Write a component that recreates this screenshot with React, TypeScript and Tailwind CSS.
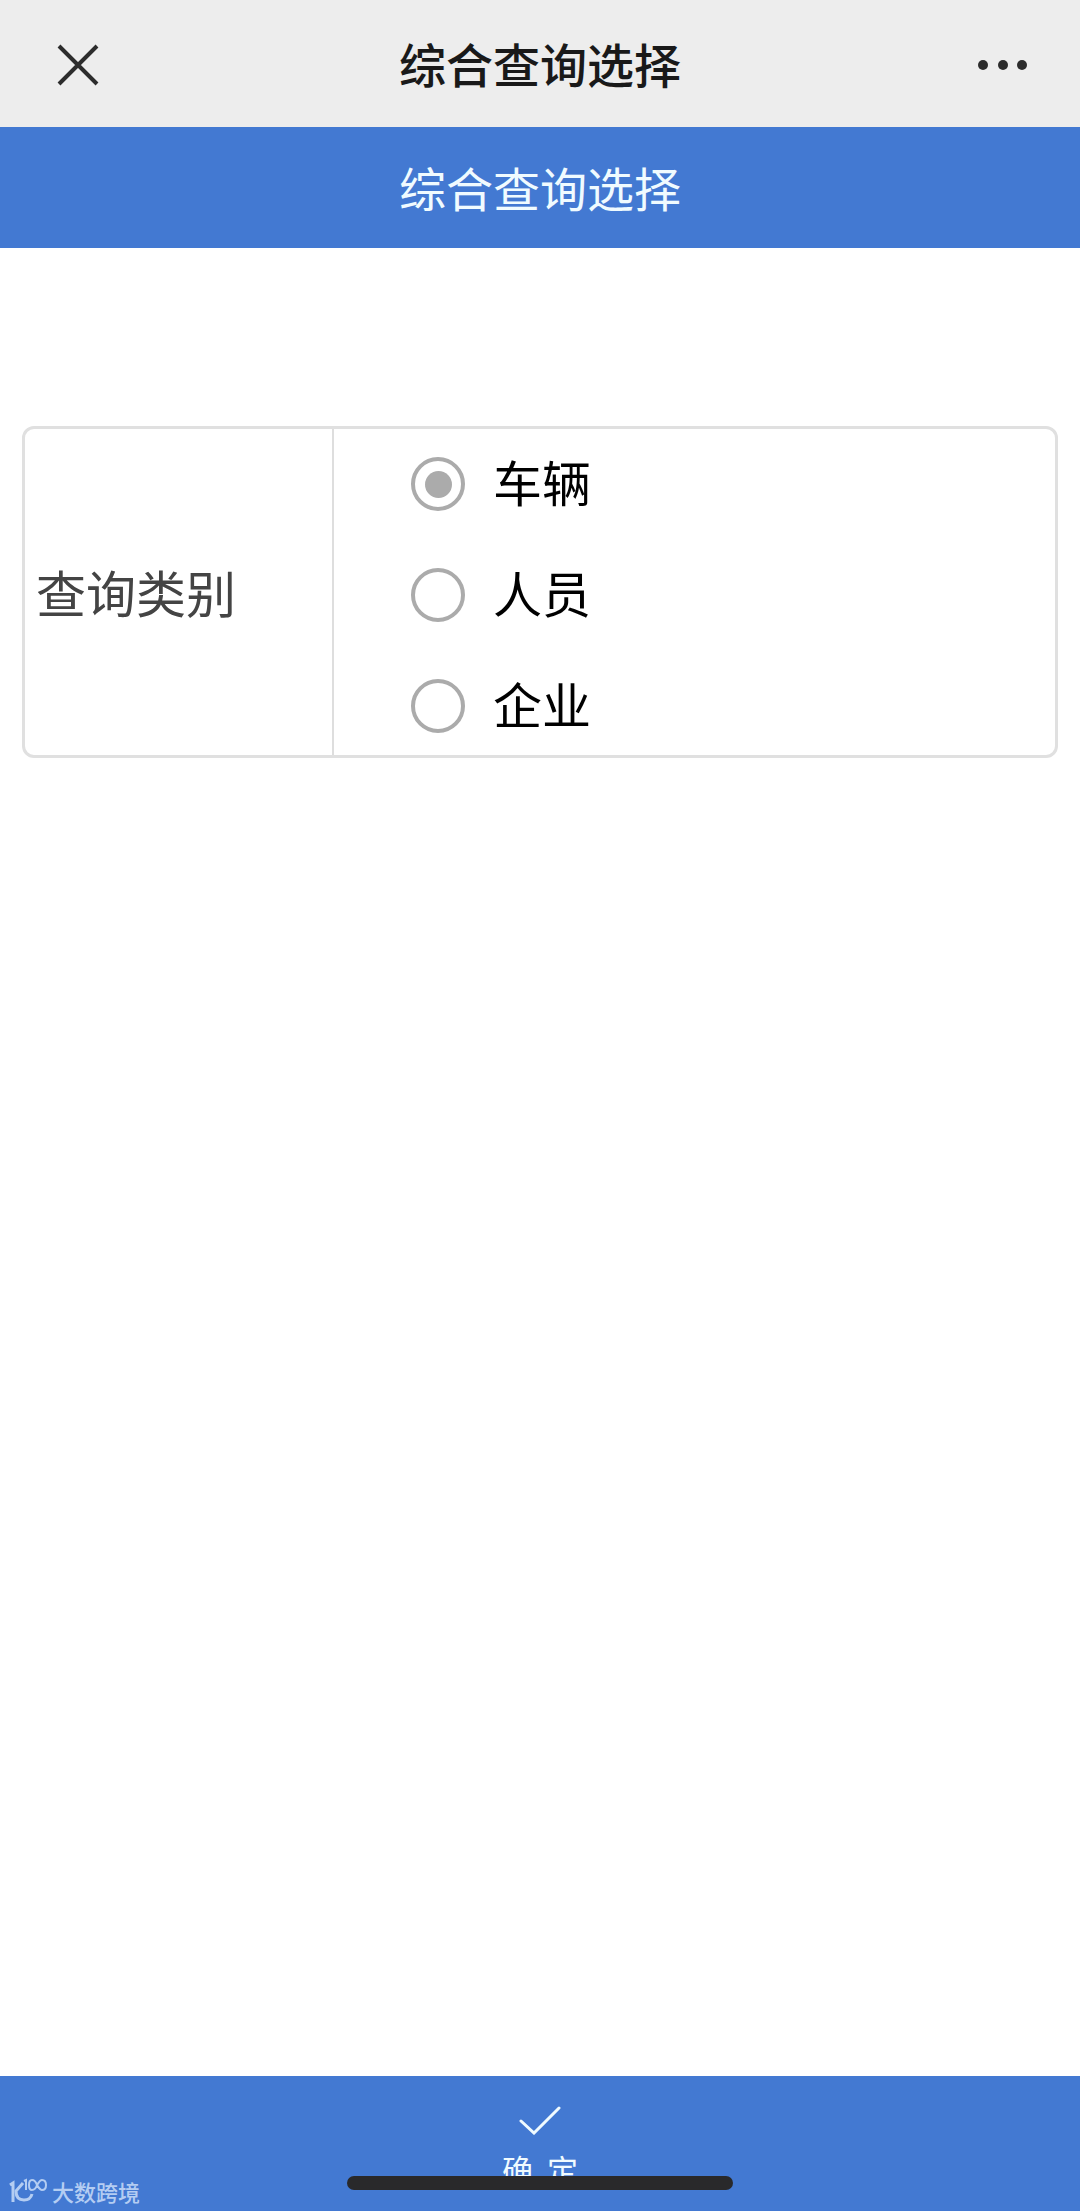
import { useState } from "react";

const OPTIONS = ["车辆", "人员", "企业"];

function NavBar() {
  return (
    <header className="grid h-[127px] grid-cols-[1fr_auto_1fr] items-center bg-[#ededed] px-12 pt-[3px]">
      <button type="button" aria-label="关闭" className="justify-self-start p-2">
        <svg viewBox="0 0 44 44" className="size-11" fill="none" stroke="#2c2c2c" strokeWidth="4">
          <path d="M3 3 41 41M41 3 3 41" />
        </svg>
      </button>
      <h1 className="pb-1 text-[47px] leading-[64px] font-medium text-[#191919]">综合查询选择</h1>
      <button type="button" aria-label="更多" className="justify-self-end p-1">
        <svg viewBox="0 0 50 12" className="h-3 w-[50px]" fill="#2c2c2c">
          <circle cx="5" cy="6" r="5" />
          <circle cx="25" cy="6" r="5" />
          <circle cx="44" cy="6" r="5" />
        </svg>
      </button>
    </header>
  );
}

function CategoryForm() {
  const [selected, setSelected] = useState(OPTIONS[0]);
  return (
    <section
      role="radiogroup"
      aria-labelledby="category-label"
      className="mx-[22px] mt-[178px] flex rounded-xl border-[3px] border-[#e0e0e0]"
    >
      <div className="flex w-[30%] items-center border-r-2 border-[#dedede] pb-0.5 pl-[11px]">
        <span id="category-label" className="text-[50px] leading-[64px] text-[#444444]">
          查询类别
        </span>
      </div>
      <div className="flex flex-1 flex-col items-start gap-[41px] pt-5 pb-3.5 pl-[77px]">
        {OPTIONS.map((option) => (
          <label key={option} className="flex items-center gap-7 text-[49px] leading-[64px] text-black">
            <input
              type="radio"
              name="category"
              value={option}
              checked={selected === option}
              onChange={() => setSelected(option)}
              className="grid size-[54px] appearance-none place-items-center rounded-full border-4 border-[#ababab] before:size-[27px] before:rounded-full before:content-[''] checked:before:bg-[#ababab]"
            />
            <span className="pb-1.5">{option}</span>
          </label>
        ))}
      </div>
    </section>
  );
}

function Watermark() {
  return (
    <div className="absolute bottom-1 left-2 flex items-center gap-1 text-[#b4cdf2]">
      <svg viewBox="0 0 40 28" className="h-7 w-10" fill="none" stroke="currentColor" strokeWidth="3">
        <path d="M2 8 5 6V25" />
        <path d="M15 6 8 14C8 20 11 23 16 23C20 23 23 21 24 17" />
        <path d="M16 4 18 3V13" strokeWidth="2" />
        <path d="M29 8C28 5 26 3 24 3C22 3 21 5 21 8C21 11 22 13 24 13C26 13 28 11 29 8C31 5 32 3 34 3C37 3 38 5 38 8C38 11 37 13 34 13C32 13 31 11 29 8Z" strokeWidth="2" />
      </svg>
      <span className="text-[22px] leading-8 font-medium">大数跨境</span>
    </div>
  );
}

export default function App() {
  return (
    <div className="flex min-h-screen flex-col bg-white font-['Noto_Sans_CJK_SC',sans-serif]">
      <NavBar />
      <h2 className="bg-[#4379d2] pt-7 pb-[29px] text-center text-[47px] leading-[64px] text-[#f0fbff]">
        综合查询选择
      </h2>
      <main className="flex-1">
        <CategoryForm />
      </main>
      <footer className="relative bg-[#4379d2]">
        <button
          type="button"
          className="flex h-[135px] w-full flex-col items-center gap-3 pt-[29px] text-[31px] leading-[44px] whitespace-pre text-[#f0fbff]"
        >
          <svg viewBox="0 0 42 30" className="h-[30px] w-[42px] shrink-0" fill="none" stroke="currentColor" strokeWidth="3" strokeLinecap="round">
            <path d="M2 16 15 28 40 3" />
          </svg>
          {"确  定"}
        </button>
        <Watermark />
        <div className="absolute bottom-[21px] left-1/2 h-3.5 w-[386px] -translate-x-1/2 rounded-full bg-[#29292b]" />
      </footer>
    </div>
  );
}
